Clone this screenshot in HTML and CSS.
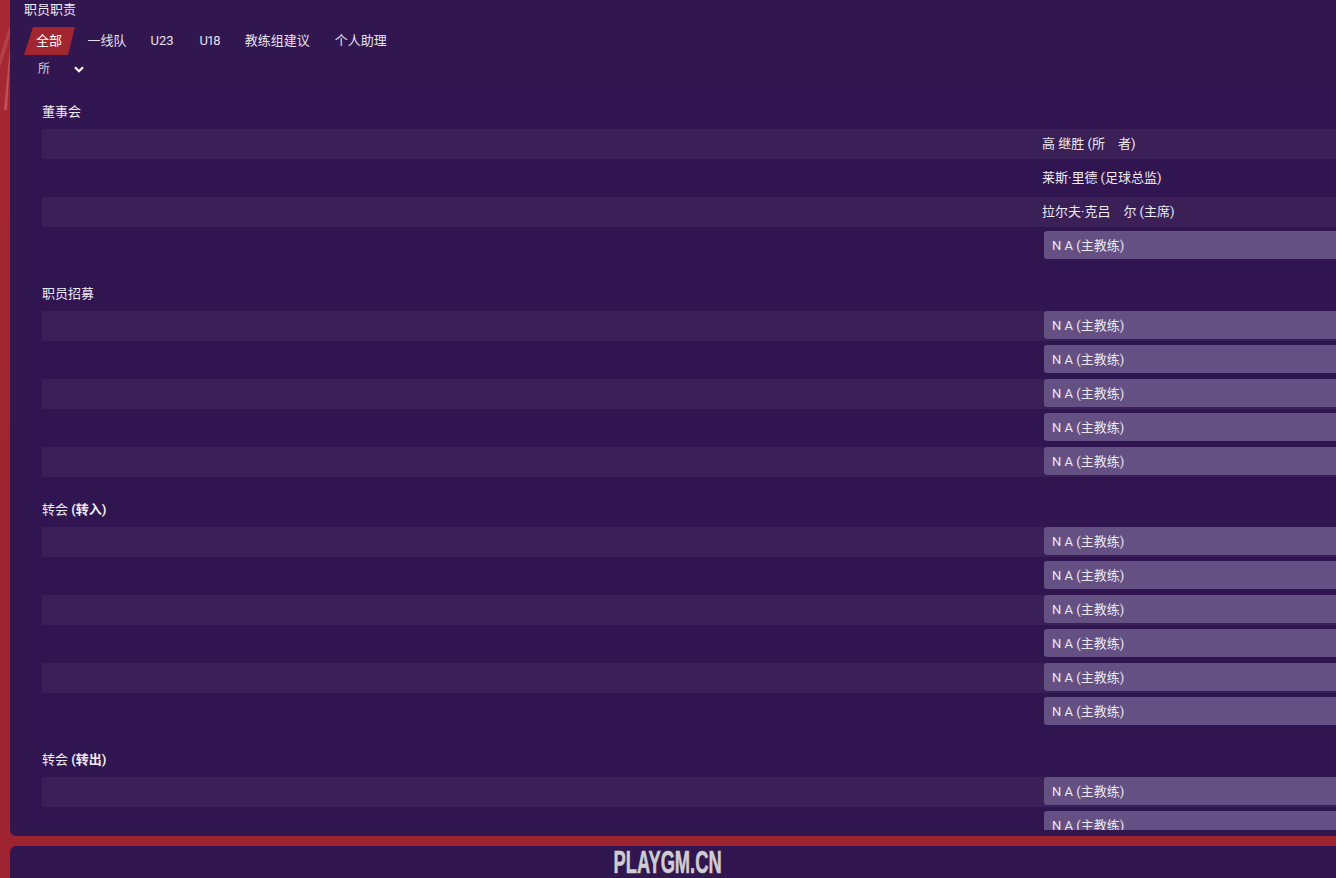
FILE: index.html
```html
<!DOCTYPE html>
<html lang="zh-CN">
<head>
<meta charset="utf-8">
<title>职员职责</title>
<link rel="stylesheet" href="styles.css">
</head>
<body>
<svg class="streaks" width="10" height="120" viewBox="0 0 10 120" aria-hidden="true">
  <polygon points="10,48 10,60 7,110 4,110" fill="#c8707a" opacity="0.6"/>
  <polygon points="10,25 10,36 0,68 0,56" fill="#c8707a" opacity="0.35"/>
</svg>
<main class="panel">
  <h1 class="page-title">职员职责</h1>
  <nav class="tabs">
    <a class="tab active">全部</a>
    <a class="tab">一线队</a>
    <a class="tab tab-u23">U23</a>
    <a class="tab tab-u18">U18</a>
    <a class="tab">教练组建议</a>
    <a class="tab">个人助理</a>
  </nav>
  <div class="filter">
    <span class="filter-label">所</span>
    <svg class="chevron" width="10" height="7" viewBox="0 0 10 7" aria-hidden="true"><path d="M1 1.2 5 5.2 9 1.2" fill="none" stroke="#fff" stroke-width="2.2"/></svg>
  </div>
  <div class="scroller">
    <section class="group">
      <h2 class="group-title">董事会</h2>
      <div class="row"><span class="person">高 继胜 (所　者)</span></div>
      <div class="row"><span class="person">莱斯·里德 (足球总监)</span></div>
      <div class="row"><span class="person">拉尔夫·克吕　尔 (主席)</span></div>
      <div class="row"><span class="pick">N A (主教练)</span></div>
    </section>
    <section class="group">
      <h2 class="group-title">职员招募</h2>
      <div class="row"><span class="pick">N A (主教练)</span></div>
      <div class="row"><span class="pick">N A (主教练)</span></div>
      <div class="row"><span class="pick">N A (主教练)</span></div>
      <div class="row"><span class="pick">N A (主教练)</span></div>
      <div class="row"><span class="pick">N A (主教练)</span></div>
    </section>
    <section class="group">
      <h2 class="group-title">转会 <b>(转入)</b></h2>
      <div class="row"><span class="pick">N A (主教练)</span></div>
      <div class="row"><span class="pick">N A (主教练)</span></div>
      <div class="row"><span class="pick">N A (主教练)</span></div>
      <div class="row"><span class="pick">N A (主教练)</span></div>
      <div class="row"><span class="pick">N A (主教练)</span></div>
      <div class="row"><span class="pick">N A (主教练)</span></div>
    </section>
    <section class="group">
      <h2 class="group-title">转会 <b>(转出)</b></h2>
      <div class="row"><span class="pick">N A (主教练)</span></div>
      <div class="row"><span class="pick">N A (主教练)</span></div>
    </section>
  </div>
</main>
<footer class="bottom"></footer>
<div class="watermark"><span class="watermark-text">PLAYGM.CN</span></div>
</body>
</html>
```
FILE: styles.css
```css
* { box-sizing: border-box; }
html, body { height: 100%; margin: 0; }
body {
  position: relative;
  display: flex;
  flex-direction: column;
  height: 878px;
  padding-left: 10px;
  overflow: hidden;
  background: linear-gradient(#a72833, #9d2430 60%);
  color: #eeeaf2;
  font-family: Roboto, "Noto Sans CJK SC", sans-serif;
  font-size: 13px;
}
.streaks { position: absolute; left: 0; top: 0; }
.panel {
  height: 836px;
  flex: none;
  padding: 0 0 6px 14px;
  display: flex;
  flex-direction: column;
  background: #32164f;
  border-radius: 0 0 0 6px;
  overflow: hidden;
}
.page-title { margin: 0; height: 20px; font-size: 13px; line-height: 20px; font-weight: 400; }
.tabs { display: flex; gap: 0; margin-top: 7px; height: 28px; }
.tab { padding: 0 12.5px; line-height: 27px; color: #e6e1ec; }
.tab-u23 { margin: 0 1px 0 -1px; }
.tab-u18 { letter-spacing: -1px; }
.active {
  padding: 0 13px 0 12px;
  color: #fff;
  background: #a2262f;
  clip-path: polygon(9px 0, 100% 0, calc(100% - 7px) 100%, 0 100%);
}
.filter { display: flex; align-items: center; height: 18px; margin-top: 5px; padding-left: 14px; }
.filter-label { font-size: 12px; line-height: 16px; margin-bottom: 1px; width: 36px; color: #d8d2e0; }
.chevron { flex: none; }
.scroller { flex: 1; min-height: 0; margin-top: 10px; overflow: hidden; margin-right: -20px; }
.group {
  margin: 0 0 3px 4px;
  padding: 14px 0 6px 14px;
  border-radius: 0 0 0 6px;
  background: #311550;
}
.group-title { margin: 0 0 7px; height: 20px; font-size: 13px; line-height: 20px; font-weight: 400; }
.group-title b { font-weight: 700; }
.row { display: flex; height: 30px; margin-bottom: 4px; padding-left: 1000px; }
.row:last-child { margin-bottom: 0; }
.row:nth-of-type(odd) { background: #3a2056; }
.person { line-height: 29px; }
.pick {
  flex: 1;
  height: 28px;
  margin-left: 2px;
  padding-left: 8px;
  line-height: 29px;
  background: #645082;
  border-radius: 3px;
  color: #ece8f2;
}
.bottom { flex: 1; margin-top: 10px; background: #32164f; border-radius: 6px 0 0 0; }
.watermark {
  position: absolute;
  left: 0;
  right: 0;
  top: 848px;
  text-align: center;
  font-family: "Liberation Sans", sans-serif;
  font-size: 31px;
  line-height: 30px;
  font-weight: 700;
  color: #cfcdd2;
}
.watermark-text { display: inline-block; transform: scaleX(0.59); -webkit-text-stroke: 0.6px #cfcdd2; }
```
